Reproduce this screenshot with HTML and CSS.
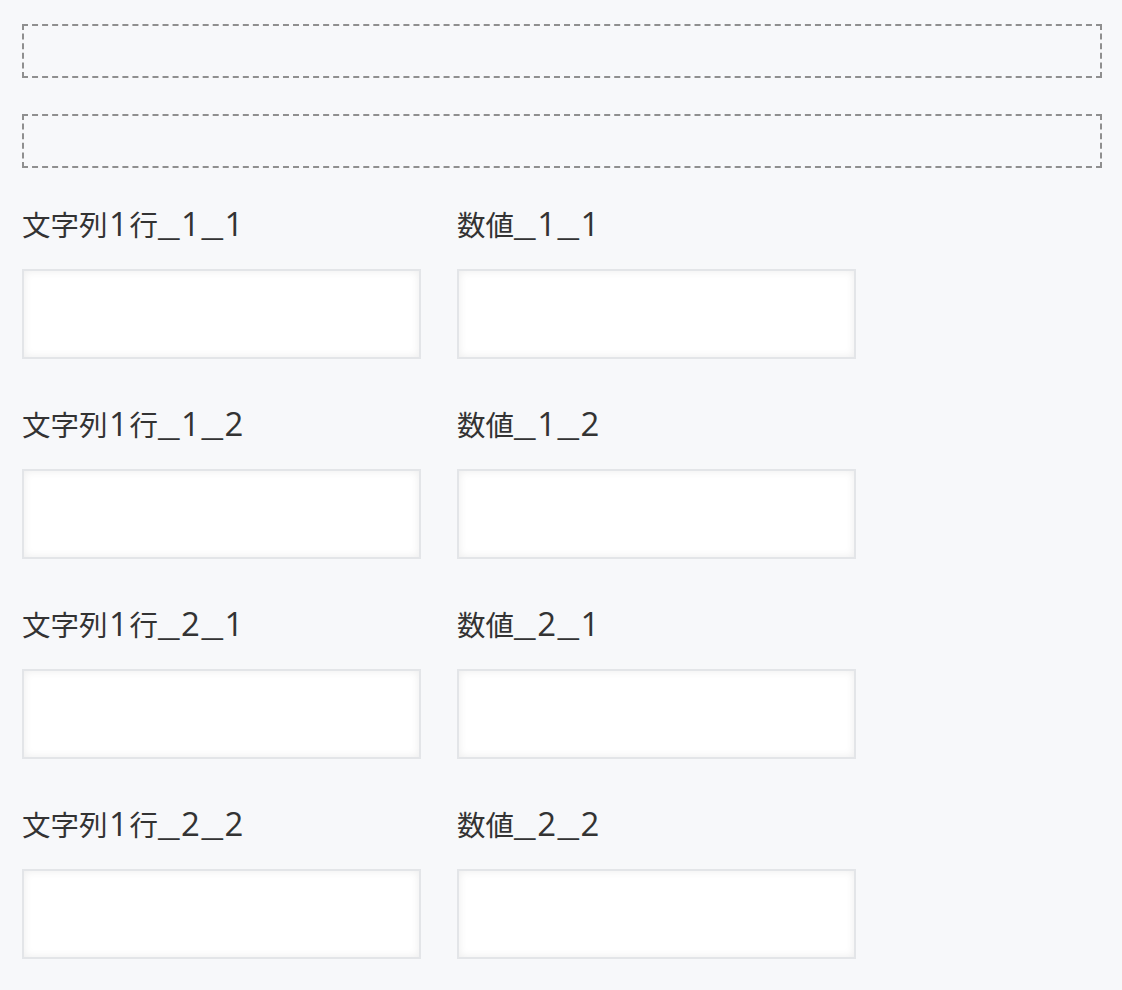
FILE: index.html
```html
<!DOCTYPE html>
<html lang="ja">
<head>
<meta charset="utf-8">
<link rel="stylesheet" href="styles.css">
</head>
<body>
<div class="page">
  <div class="dropzone"></div>
  <div class="dropzone"></div>
  <div class="fields">
    <div class="field"><label class="label">文字列<span class="lat">1</span>行<span class="us">_</span><span class="lat">1</span><span class="us">_</span><span class="lat">1</span></label><input class="input" type="text"></div>
    <div class="field"><label class="label">数値<span class="us">_</span><span class="lat">1</span><span class="us">_</span><span class="lat">1</span></label><input class="input" type="text"></div>
    <div class="field"><label class="label">文字列<span class="lat">1</span>行<span class="us">_</span><span class="lat">1</span><span class="us">_</span><span class="lat">2</span></label><input class="input" type="text"></div>
    <div class="field"><label class="label">数値<span class="us">_</span><span class="lat">1</span><span class="us">_</span><span class="lat">2</span></label><input class="input" type="text"></div>
    <div class="field"><label class="label">文字列<span class="lat">1</span>行<span class="us">_</span><span class="lat">2</span><span class="us">_</span><span class="lat">1</span></label><input class="input" type="text"></div>
    <div class="field"><label class="label">数値<span class="us">_</span><span class="lat">2</span><span class="us">_</span><span class="lat">1</span></label><input class="input" type="text"></div>
    <div class="field"><label class="label">文字列<span class="lat">1</span>行<span class="us">_</span><span class="lat">2</span><span class="us">_</span><span class="lat">2</span></label><input class="input" type="text"></div>
    <div class="field"><label class="label">数値<span class="us">_</span><span class="lat">2</span><span class="us">_</span><span class="lat">2</span></label><input class="input" type="text"></div>
  </div>
</div>
</body>
</html>
```
FILE: styles.css
```css
html, body {
  margin: 0;
  padding: 0;
  background: #f7f8fa;
}
body {
  font-family: "Noto Sans CJK JP", "Noto Sans", sans-serif;
  color: #333333;
}
.page {
  padding: 24px 20px 24px 22px;
  display: flex;
  flex-direction: column;
  gap: 36px;
}
.dropzone {
  height: 50px;
  border: 2px dashed #8f8f8f;
}
.fields {
  display: grid;
  grid-template-columns: 399px 399px;
  column-gap: 36px;
  row-gap: 45px;
}
.field {
  display: flex;
  flex-direction: column;
}
.label {
  font-size: 28.5px;
  line-height: 40px;
  height: 40px;
  margin-bottom: 25px;
  white-space: nowrap;
}
.lat {
  font-family: "Open Sans", "Noto Sans", sans-serif;
  font-size: 33px;
  padding: 0 1.5px;
}
.us {
  font-family: "Liberation Mono", "DejaVu Sans Mono", monospace;
  font-size: 36px;
}
.input {
  box-sizing: border-box;
  width: 399px;
  height: 90px;
  margin: 0;
  border: 2px solid #e3e5e8;
  background: #ffffff;
  box-shadow: inset 0 0 8px rgba(0, 0, 0, 0.08);
  outline: none;
  padding: 0 12px;
  font-size: 20px;
}
```
